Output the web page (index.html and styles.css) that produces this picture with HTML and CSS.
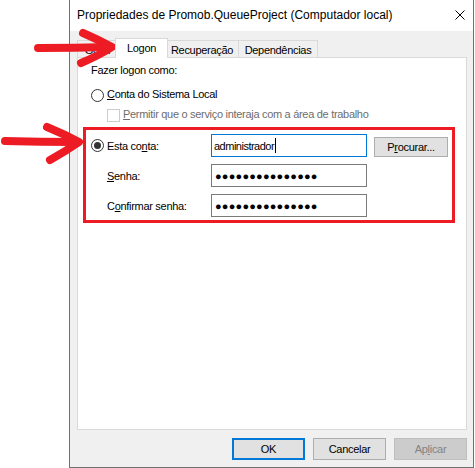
FILE: index.html
```html
<!DOCTYPE html>
<html lang="pt-BR">
<head>
  <meta charset="UTF-8">
  <meta name="viewport" content="width=device-width, initial-scale=1.0">
  <title>Propriedades de Promob.QueueProject (Computador local)</title>
  <link rel="stylesheet" href="styles.css">
</head>
<body>
  <div class="window">
    <div class="titlebar">
      <span class="title">Propriedades de Promob.QueueProject (Computador local)</span>
      <svg class="close" width="10" height="10" viewBox="0 0 10 10">
        <path d="M0.5 0.5 L9.5 9.5 M9.5 0.5 L0.5 9.5" stroke="#000" stroke-width="1" fill="none"/>
      </svg>
    </div>

    <div class="tabs">
      <div class="tab tab-general">Geral</div>
      <div class="tab tab-logon active">Logon</div>
      <div class="tab tab-recovery">Recuperação</div>
      <div class="tab tab-deps">Dependências</div>
    </div>

    <div class="panel">
      <div class="group-label">Fazer logon como:</div>
      <div class="option first">
        <span class="radio"></span>
        <span><u>C</u>onta do Sistema Local</span>
      </div>
      <div class="option sub disabled">
        <span class="checkbox"></span>
        <span><u>P</u>ermitir que o serviço interaja com a área de trabalho</span>
      </div>

      <div class="account">
        <div class="field-row">
          <div class="field-label with-radio"><span class="radio checked"></span>Esta co<u>n</u>ta:</div>
          <div class="textbox focused">administrador<span class="caret"></span></div>
          <button class="btn browse">P<u>r</u>ocurar...</button>
        </div>
        <div class="field-row">
          <div class="field-label"><u>S</u>enha:</div>
          <div class="textbox"><span class="dots">●●●●●●●●●●●●●●●</span></div>
        </div>
        <div class="field-row">
          <div class="field-label">C<u>o</u>nfirmar senha:</div>
          <div class="textbox"><span class="dots">●●●●●●●●●●●●●●●</span></div>
        </div>
      </div>
    </div>

    <div class="buttons">
      <button class="btn default">OK</button>
      <button class="btn">Cancelar</button>
      <button class="btn" disabled>Ap<u>l</u>icar</button>
    </div>
  </div>

  <!-- red annotations drawn over the dialog -->
  <div class="mark mark-tab"></div>
  <div class="mark mark-account"></div>
  <svg class="arrows" width="475" height="468" viewBox="0 0 475 468">
    <g stroke="#ed1c24" stroke-width="8" stroke-linecap="round" stroke-linejoin="round" fill="none">
      <path d="M38 48 Q75 48 110 47"/>
      <path d="M83 33 Q99 40 112 47 Q98 56 81 63"/>
      <path d="M5 141 Q40 142 76 142"/>
      <path d="M47 127 Q64 134 79 142 Q66 151 50 160"/>
    </g>
  </svg>
</body>
</html>
```

FILE: styles.css
```css
body {
  margin: 0;
  background: #fff;
  font-family: "Liberation Sans", Arial, sans-serif;
  font-size: 11px;
  letter-spacing: -0.3px;
  color: #000;
}
.window {
  box-sizing: border-box;
  width: 405px;
  height: 468px;
  margin-left: 69px;
  border: 1px solid #707070;
  border-top: none;
  background: #f0f0f0;
}
.titlebar {
  display: flex;
  height: 31px;
  padding-left: 7px;
  background: #fff;
}
.title {
  font-size: 12px;
  letter-spacing: 0;
  line-height: 31px;
}
.close {
  margin: 10px 8px 0 auto;
}

/* tabs */
.tabs {
  display: flex;
  align-items: flex-end;
  height: 19px;
  margin-top: 7px;
  padding-left: 7px;
}
.tab {
  box-sizing: border-box;
  height: 17px;
  margin-left: -1px;
  border: 1px solid #d9d9d9;
  border-bottom: none;
  background: #f0f0f0;
  text-align: center;
  line-height: 18px;
}
.tab-general {
  width: 41px;
  margin-left: 0;
}
.tab-logon {
  width: 53px;
}
.tab-recovery {
  width: 74px;
}
.tab-deps {
  width: 80px;
}
.tab.active {
  position: relative;
  z-index: 1;
  height: 20px;
  margin: 0 -2px -1px -3px;
  background: #fff;
}

/* panel */
.panel {
  box-sizing: border-box;
  height: 373px;
  margin: 0 6px 0 7px;
  padding: 5px 0 0 13px;
  border: 1px solid #d9d9d9;
  background: #fff;
}
.group-label {
  line-height: 14px;
}
.option {
  display: flex;
  align-items: flex-start;
  line-height: 14px;
  margin-top: 5px;
}
.option.first {
  margin-top: 10px;
}
.option.sub {
  padding-left: 16px;
}
.option.disabled {
  color: #6d6d6d;
}
.radio,
.checkbox {
  box-sizing: border-box;
  flex: none;
  width: 13px;
  height: 13px;
  margin: 2px 3px 0 0;
  border: 1px solid #333;
  background: #fff;
}
.radio {
  border-radius: 50%;
  display: flex;
  align-items: center;
  justify-content: center;
}
.radio.checked::after {
  content: "";
  width: 7px;
  height: 7px;
  border-radius: 50%;
  background: #333;
}
.checkbox {
  border-color: #cccccc;
}

.account {
  margin-top: 12px;
}
.field-row {
  display: flex;
  align-items: center;
  height: 23px;
  margin-top: 7px;
}
.field-row:first-child {
  margin-top: 0;
}
.field-label {
  box-sizing: border-box;
  width: 120px;
  padding-left: 16px;
  display: flex;
  align-items: center;
  white-space: pre;
}
.field-label.with-radio {
  padding-left: 0;
}
.field-label .radio {
  margin-top: 0;
}
.textbox {
  box-sizing: border-box;
  width: 156px;
  height: 23px;
  padding-left: 2px;
  border: 1px solid #7a7a7a;
  background: #fff;
  display: flex;
  align-items: center;
}
.textbox.focused {
  border-color: #0078d7;
  letter-spacing: -0.5px;
}
.caret {
  width: 1px;
  height: 15px;
  margin-left: 1px;
  background: #000;
}
.dots {
  font-size: 11px;
  letter-spacing: 0.2px;
  padding-left: 1px;
}

/* buttons */
.btn {
  box-sizing: border-box;
  padding: 0;
  border: 1px solid #adadad;
  background: #e1e1e1;
  color: #000;
  font: inherit;
  letter-spacing: inherit;
}
.btn.browse {
  align-self: flex-start;
  width: 74px;
  height: 20px;
  margin: 3px 0 0 7px;
}
.buttons {
  display: flex;
  justify-content: flex-end;
  gap: 8px;
  margin-top: 8px;
  padding-right: 6px;
}
.buttons .btn {
  width: 73px;
  height: 22px;
}
.btn.default {
  border: 2px solid #0078d7;
}
.btn:disabled {
  background: #cccccc;
  border-color: #bfbfbf;
  color: #838383;
}

/* annotations */
.mark {
  position: absolute;
  box-sizing: border-box;
  border: 3px solid #ed1c24;
}
.mark-tab {
  left: 117px;
  top: 38px;
  width: 49px;
  height: 20px;
}
.mark-account {
  left: 83px;
  top: 127px;
  width: 372px;
  height: 96px;
}
.arrows {
  position: absolute;
  left: 0;
  top: 0;
  pointer-events: none;
}
```
